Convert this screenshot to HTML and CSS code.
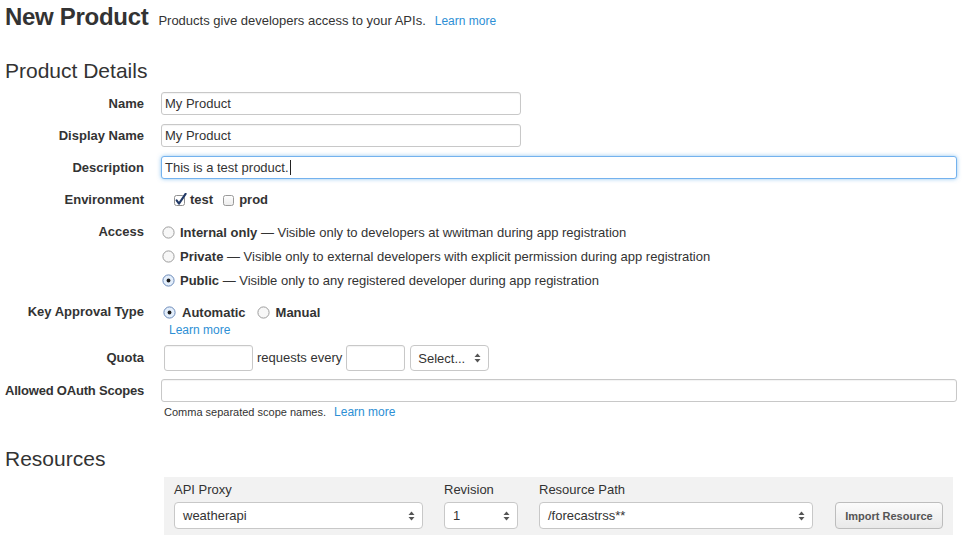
FILE: index.html
```html
<!DOCTYPE html>
<html>
<head>
<meta charset="utf-8">
<link rel="stylesheet" href="styles.css">
</head>
<body>
<div class="page">
  <div class="header">
    <h1 class="title">New Product</h1>
    <span class="subtitle">Products give developers access to your APIs.</span>
    <a class="link subtitle-link" href="#">Learn more</a>
  </div>

  <h2 class="section">Product Details</h2>

  <div class="row row-input">
    <div class="label">Name</div>
    <div class="field input w-half">My Product</div>
  </div>
  <div class="row row-input">
    <div class="label">Display Name</div>
    <div class="field input w-half">My Product</div>
  </div>
  <div class="row row-input">
    <div class="label">Description</div>
    <div class="field input w-full focused">This is a test product.<span class="caret"></span></div>
  </div>

  <div class="row row-env">
    <div class="label">Environment</div>
    <div class="env">
      <span class="opt">
        <svg class="cb" width="14" height="14" viewBox="0 0 14 14">
          <rect x="1.5" y="2.5" width="10" height="10" rx="2" fill="#fff" stroke="#8f8f8f"/>
          <path d="M3.6 7.4 L6 10.6 L12.6 0.8" fill="none" stroke="#223a66" stroke-width="2.1" stroke-linecap="round" stroke-linejoin="round"/>
        </svg>
        <span>test</span>
      </span>
      <span class="opt">
        <svg class="cb" width="14" height="14" viewBox="0 0 14 14">
          <defs><linearGradient id="gb" x1="0" y1="0" x2="0" y2="1"><stop offset="0" stop-color="#ffffff"/><stop offset="1" stop-color="#ececec"/></linearGradient></defs>
          <rect x="1.5" y="2.5" width="10" height="10" rx="2" fill="url(#gb)" stroke="#9a9a9a"/>
        </svg>
        <span>prod</span>
      </span>
    </div>
  </div>

  <div class="row row-access">
    <div class="label">Access</div>
    <div class="radios">
      <div class="radio-line">
        <svg class="rd" width="13" height="13" viewBox="0 0 13 13"><circle cx="6.5" cy="6.5" r="5.6" fill="#f7f7f7" stroke="#9c9c9c"/></svg>
        <span><b class="strong">Internal only</b> — Visible only to developers at wwitman during app registration</span>
      </div>
      <div class="radio-line">
        <svg class="rd" width="13" height="13" viewBox="0 0 13 13"><circle cx="6.5" cy="6.5" r="5.6" fill="#f7f7f7" stroke="#9c9c9c"/></svg>
        <span><b class="strong">Private</b> — Visible only to external developers with explicit permission during app registration</span>
      </div>
      <div class="radio-line">
        <svg class="rd" width="13" height="13" viewBox="0 0 13 13"><circle cx="6.5" cy="6.5" r="5.6" fill="#e3eefb" stroke="#6a89b8"/><circle cx="6.5" cy="6.5" r="1.9" fill="#1c1c1c"/></svg>
        <span><b class="strong">Public</b> — Visible only to any registered developer during app registration</span>
      </div>
    </div>
  </div>

  <div class="row row-key">
    <div class="label">Key Approval Type</div>
    <div class="key">
      <div class="key-opts">
        <span class="kopt">
          <svg class="rd" width="13" height="13" viewBox="0 0 13 13"><circle cx="6.5" cy="6.5" r="5.6" fill="#e3eefb" stroke="#6a89b8"/><circle cx="6.5" cy="6.5" r="1.9" fill="#1c1c1c"/></svg>
          <b class="strong">Automatic</b>
        </span>
        <span class="kopt">
          <svg class="rd" width="13" height="13" viewBox="0 0 13 13"><circle cx="6.5" cy="6.5" r="5.6" fill="#f7f7f7" stroke="#9c9c9c"/></svg>
          <b class="strong">Manual</b>
        </span>
      </div>
      <a class="link key-learn" href="#">Learn more</a>
    </div>
  </div>

  <div class="row row-quota">
    <div class="label">Quota</div>
    <div class="quota">
      <div class="field qinput q1"></div>
      <span class="qtext">requests every</span>
      <div class="field qinput q2"></div>
      <div class="field select qsel"><span>Select...</span>
        <svg class="arrows" width="7" height="10" viewBox="0 0 7 10"><path d="M3.5 0.5 L6.5 4 L0.5 4 Z" fill="#555"/><path d="M3.5 9.5 L6.5 6 L0.5 6 Z" fill="#555"/></svg>
      </div>
    </div>
  </div>

  <div class="row row-oauth">
    <div class="label label-tight">Allowed OAuth Scopes</div>
    <div class="oauth">
      <div class="field input w-full"></div>
      <div class="help">Comma separated scope names. <a class="link help-link" href="#">Learn more</a></div>
    </div>
  </div>

  <h2 class="section resources-title">Resources</h2>

  <div class="panel">
    <div class="col col-proxy">
      <div class="plabel">API Proxy</div>
      <div class="field select">weatherapi
        <svg class="arrows" width="7" height="10" viewBox="0 0 7 10"><path d="M3.5 0.5 L6.5 4 L0.5 4 Z" fill="#555"/><path d="M3.5 9.5 L6.5 6 L0.5 6 Z" fill="#555"/></svg>
      </div>
    </div>
    <div class="col col-rev">
      <div class="plabel">Revision</div>
      <div class="field select">1
        <svg class="arrows" width="7" height="10" viewBox="0 0 7 10"><path d="M3.5 0.5 L6.5 4 L0.5 4 Z" fill="#555"/><path d="M3.5 9.5 L6.5 6 L0.5 6 Z" fill="#555"/></svg>
      </div>
    </div>
    <div class="col col-path">
      <div class="plabel">Resource Path</div>
      <div class="field select">/forecastrss**
        <svg class="arrows" width="7" height="10" viewBox="0 0 7 10"><path d="M3.5 0.5 L6.5 4 L0.5 4 Z" fill="#555"/><path d="M3.5 9.5 L6.5 6 L0.5 6 Z" fill="#555"/></svg>
      </div>
    </div>
    <div class="col col-btn">
      <div class="button">Import Resource</div>
    </div>
  </div>
</div>
</body>
</html>
```

FILE: styles.css
```css
* { box-sizing: border-box; }
html, body { margin: 0; padding: 0; background: #fff; }
body {
  font-family: "Liberation Sans", Arial, sans-serif;
  font-size: 13px;
  color: #333;
  width: 966px;
  height: 547px;
  overflow: hidden;
}
.page { padding: 0 0 0 5px; }

.header {
  display: flex;
  align-items: baseline;
  margin-top: 2px;
  height: 30px;
}
.title {
  margin: 0;
  font-size: 24px;
  line-height: 30px;
  font-weight: bold;
  color: #333;
  letter-spacing: -0.3px;
}
.subtitle { margin-left: 10px; font-size: 13px; color: #333; }
.subtitle-link { margin-left: 9px; font-size: 12px; }
.link { color: #2d8fd5; text-decoration: none; }

.section {
  margin: 26px 0 0 0;
  font-size: 21px;
  line-height: 26px;
  font-weight: normal;
  color: #333;
}

.row { display: flex; align-items: flex-start; }
.label {
  width: 139px;
  flex: none;
  text-align: right;
  font-weight: bold;
  color: #333;
  white-space: nowrap;
}
.label-tight { letter-spacing: -0.2px; }

.row-input { height: 23px; margin-bottom: 9px; }
.section + .row-input { margin-top: 8px; }
.row-input .label { line-height: 23px; }

.field {
  background: #fff;
  border: 1px solid #c8c8c8;
  border-radius: 3px;
  box-shadow: inset 0 1px 1px rgba(0,0,0,0.05);
}
.input {
  height: 23px;
  margin-left: 17px;
  padding: 0 3px;
  line-height: 21px;
  font-size: 13px;
  color: #333;
  display: flex;
  align-items: center;
}
.w-half { width: 360px; }
.w-full { width: 796px; }
.focused {
  border-color: #74b2ee;
  box-shadow: 0 0 4px rgba(102,175,233,0.7);
}
.caret { display: inline-block; width: 1px; height: 15px; background: #222; margin-left: 1px; }

.row-env { margin-top: 11px; height: 20px; line-height: 20px; }
.env { display: flex; align-items: center; margin-left: 29px; height: 20px; }
.opt { display: flex; align-items: center; font-weight: bold; margin-right: 9px; }
.cb { margin-right: 3px; margin-top: -1px; }

.row-access { margin-top: 10px; }
.row-access .label { line-height: 24px; }
.radios { margin-left: 18px; }
.radio-line { display: flex; align-items: center; height: 24px; }
.rd { margin-right: 5px; flex: none; }
.strong { font-weight: bold; }

.row-key { margin-top: 8px; }
.row-key .label { line-height: 24px; }
.key { margin-left: 19px; display: flex; flex-direction: column; }
.key-opts { display: flex; align-items: center; height: 24px; }
.kopt { display: flex; align-items: center; margin-right: 11px; }
.kopt .rd { margin-right: 6px; }
.key-learn { font-size: 12px; line-height: 12px; margin-left: 6px; height: 12px; }

.row-quota { margin-top: 9px; }
.row-quota .label { line-height: 26px; }
.quota { display: flex; align-items: center; margin-left: 20px; }
.qinput { height: 26px; }
.q1 { width: 89px; }
.q2 { width: 59px; }
.qtext { margin: 0 4px 0 4px; padding-bottom: 2px; }
.select {
  height: 27px;
  display: flex;
  align-items: center;
  justify-content: space-between;
  padding: 0 7px 0 8px;
  border-radius: 4px;
  box-shadow: none;
  color: #333;
}
.qsel { width: 79px; height: 26px; margin-left: 5px; padding-left: 7px; }
.arrows { flex: none; }

.row-oauth { margin-top: 8px; }
.row-oauth .label { line-height: 23px; }
.oauth { display: flex; flex-direction: column; }
.help { margin-left: 20px; font-size: 11px; line-height: 18px; margin-top: 1px; color: #333; }
.help-link { font-size: 12px; margin-left: 5px; }

.resources-title { margin-top: 25px; }

.panel {
  margin: 5px 0 0 159px;
  width: 789px;
  background: #f2f2f2;
  padding: 4px 10px 6px 10px;
  display: flex;
  align-items: flex-end;
}
.col { display: flex; flex-direction: column; }
.plabel { line-height: 16px; height: 16px; margin-top: 1px; margin-bottom: 4px; }
.col-proxy { width: 249px; margin-right: 21px; }
.col-rev { width: 74px; margin-right: 21px; }
.col-path { width: 274px; margin-right: 22px; }
.col-btn { width: 108px; }
.button {
  height: 27px;
  border: 1px solid #bdbdbd;
  border-radius: 4px;
  background: linear-gradient(#fbfbfb, #e9e9e9);
  font-size: 11px;
  font-weight: bold;
  color: #555;
  display: flex;
  align-items: center;
  justify-content: center;
}
```
